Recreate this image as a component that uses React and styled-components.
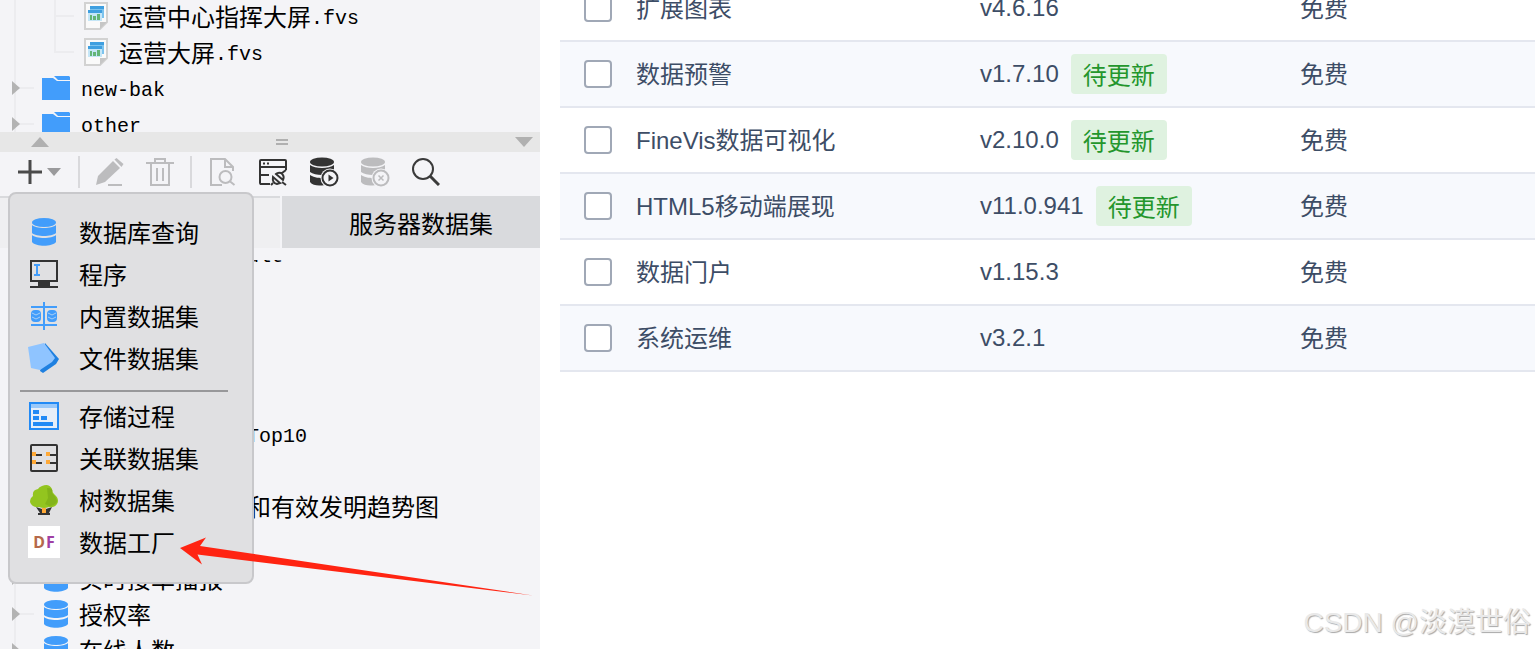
import styled, { createGlobalStyle } from "styled-components";

const files = ["运营中心指挥大屏", "运营大屏"];
const folders = ["new-bak", "other"];

// a row without an icon has its left part under the open menu
const datasets = [
  { latin: "ult" },
  {},
  {},
  {},
  {},
  { latin: "Top10" },
  {},
  { text: "和有效发明趋势图" },
  {},
  { text: "实时接单播报", icon: true },
  { text: "授权率", icon: true },
  { text: "在线人数", icon: true },
];

const plugins = [
  { id: "chart", name: "扩展图表", version: "v4.6.16" },
  { id: "alert", name: "数据预警", version: "v1.7.10", update: true },
  { id: "finevis", name: "FineVis数据可视化", version: "v2.10.0", update: true },
  { id: "html5", name: "HTML5移动端展现", version: "v11.0.941", update: true },
  { id: "portal", name: "数据门户", version: "v1.15.3" },
  { id: "ops", name: "系统运维", version: "v3.2.1" },
];

export default function App() {
  return (
    <Page>
      <GlobalStyle />
      <Sidebar>
        <FileTree>
          {files.map((name) => (
            <TreeRow key={name}>
              <FileGuide last={name === "运营大屏"} />
              <FileIcon />
              <RowText>
                {name}
                <Latin>.fvs</Latin>
              </RowText>
            </TreeRow>
          ))}
          {folders.map((name) => (
            <TreeRow key={name}>
              <BranchGuide />
              <FolderIcon />
              <RowText>
                <Latin>{name}</Latin>
              </RowText>
            </TreeRow>
          ))}
        </FileTree>
        <Splitter>
          <svg width="18" height="10">
            <path d="M0 10 9 0l9 10z" fill="#b0b0b0" />
          </svg>
          <svg width="12" height="6">
            <path d="M0 1h12M0 5h12" stroke="#b0b0b0" strokeWidth="2" />
          </svg>
          <svg width="18" height="10">
            <path d="M0 0h18L9 10z" fill="#b0b0b0" />
          </svg>
        </Splitter>
        <MenuAnchor>
          <Toolbar>
            <AddButton aria-label="add">
              <svg width="44" height="28" viewBox="0 0 44 28">
                <path d="M0 14h24M12 2v24" stroke="#4a4a4a" strokeWidth="3" />
                <path d="M29 10h14l-7 8z" fill="#9a9a9c" />
              </svg>
            </AddButton>
            <Divider />
            <ToolGroup $gap={22}>
              <ToolButton aria-label="edit">
                <PencilIcon />
              </ToolButton>
              <ToolButton aria-label="delete">
                <TrashIcon />
              </ToolButton>
            </ToolGroup>
            <Divider />
            <ToolGroup $gap={23}>
              <ToolButton aria-label="preview">
                <PreviewIcon />
              </ToolButton>
              <ToolButton aria-label="connection">
                <ConnectionIcon />
              </ToolButton>
              <ToolButton aria-label="run">
                <ServerIcon color="#333">
                  <path d="M18.5 17.500v7l5-3.500z" fill="#333" />
                </ServerIcon>
              </ToolButton>
              <ToolButton aria-label="stop">
                <ServerIcon color="#bcbcbe">
                  <path d="m17.500 18.500 5 5m0-5-5 5" stroke="#bcbcbe" strokeWidth="1.500" />
                </ServerIcon>
              </ToolButton>
              <ToolButton aria-label="search">
                <svg width="28" height="28" viewBox="0 0 28 28" fill="none" stroke="#3a3a3a">
                  <circle cx="11" cy="11" r="10" strokeWidth="2" />
                  <path d="m18 18 9 9" strokeWidth="3" />
                </svg>
              </ToolButton>
            </ToolGroup>
          </Toolbar>
          <Menu>
            <MenuItem>
              <MenuIcon>
                <DatabaseIcon />
              </MenuIcon>
              数据库查询
            </MenuItem>
            <MenuItem>
              <MenuIcon>
                <ProgramIcon />
              </MenuIcon>
              程序
            </MenuItem>
            <MenuItem>
              <MenuIcon>
                <BuiltInIcon />
              </MenuIcon>
              内置数据集
            </MenuItem>
            <MenuItem>
              <MenuIcon>
                <FileDataIcon />
              </MenuIcon>
              文件数据集
            </MenuItem>
            <MenuLine />
            <MenuItem>
              <MenuIcon>
                <ProcedureIcon />
              </MenuIcon>
              存储过程
            </MenuItem>
            <MenuItem>
              <MenuIcon>
                <RelationIcon />
              </MenuIcon>
              关联数据集
            </MenuItem>
            <MenuItem>
              <MenuIcon>
                <TreeIcon />
              </MenuIcon>
              树数据集
            </MenuItem>
            <MenuItem>
              <MenuIcon>
                <Factory>
                  <Letter $color="#b5694a">D</Letter>
                  <Letter $color="#a03fa4">F</Letter>
                </Factory>
              </MenuIcon>
              数据工厂
            </MenuItem>
            <Arrow width="354" height="60" viewBox="180 537 354 60">
              <path
                d="M180 548l26-10.500-6 8.500 333 49.500-335.500-41 4.500 10z"
                fill="#ff2412"
              />
            </Arrow>
          </Menu>
        </MenuAnchor>
        <Tabs>
          <Tab aria-label="模板数据集" />
          <Tab $active>服务器数据集</Tab>
        </Tabs>
        <DatasetList>
          {datasets.map((row, index) => (
            <TreeRow key={index}>
              <DatasetGuide arrow={row.icon} />
              {row.icon ? <DatabaseIcon /> : <IconSpace />}
              <RowText $covered={!row.icon}>
                {row.text}
                {row.latin && <Latin>{row.latin}</Latin>}
              </RowText>
            </TreeRow>
          ))}
        </DatasetList>
      </Sidebar>
      <Content>
        <Table>
          <colgroup>
            <col width="76" />
            <col width="344" />
            <col width="320" />
            <col />
          </colgroup>
          <tbody>
            {plugins.map((plugin) => (
              <Row key={plugin.id}>
                <CheckCell>
                  <Checkbox type="checkbox" id={plugin.id} />
                </CheckCell>
                <TextCell>
                  <label htmlFor={plugin.id}>{plugin.name}</label>
                </TextCell>
                <Cell>
                  <Version>
                    {plugin.version}
                    {plugin.update && <Badge>待更新</Badge>}
                  </Version>
                </Cell>
                <TextCell>免费</TextCell>
              </Row>
            ))}
          </tbody>
        </Table>
      </Content>
      <Watermark>CSDN @淡漠世俗</Watermark>
    </Page>
  );
}

function FileGuide({ last }) {
  return (
    <svg width="84" height="36">
      <path
        d={last ? "M15 0v36M55 0v18h19" : "M15 0v36M55 0v36M55 18h19"}
        fill="none"
        stroke="#ececef"
        strokeWidth="2"
      />
    </svg>
  );
}

function BranchGuide() {
  return (
    <svg width="42" height="36">
      <path d="M15 0v36M15 18h19" stroke="#ececef" strokeWidth="2" />
      <path d="M12 11v14l8-7z" fill="#b3b3b3" />
    </svg>
  );
}

function DatasetGuide({ arrow }) {
  return (
    <svg width="44" height="36">
      <path d="M15 0v36M15 18h19" stroke="#ececef" strokeWidth="2" />
      {arrow && <path d="M12 11v14l8-7z" fill="#b3b3b3" />}
    </svg>
  );
}

function FileIcon() {
  return (
    <svg width="24" height="28" viewBox="0 0 24 28">
      <path d="M1 1h22v19l-7 7H1z" fill="#fafafa" stroke="#d2d2d2" strokeWidth="2" />
      <path d="M16 27v-7h7z" fill="#c6c6c6" />
      <path d="M6 4h14v12H6z" fill="#7cc3ee" />
      <path d="M6 4h14v3H6z" fill="#3f9fe0" />
      <path d="M4 8h14v11H4z" fill="#c5e6f7" />
      <path d="M4 8h14v3H4z" fill="#3f9fe0" />
      <path d="M6 13h2v5H6zM9 14h3v4H9zM13 12h3v6h-3z" fill="#63b577" />
    </svg>
  );
}

function FolderIcon() {
  return (
    <svg width="28" height="24" viewBox="0 0 28 24">
      <path d="M0 2h11l4 3h13v19H0z" fill="#429dfb" />
      <path d="M12 0h15l1 1v3H16z" fill="#429dfb" />
    </svg>
  );
}

function DatabaseIcon() {
  return (
    <svg width="24" height="28" viewBox="0 0 24 28" fill="#429dfb">
      <ellipse cx="12" cy="4.500" rx="12" ry="4.500" />
      <path d="M0 7c4 4 20 4 24 0v8c-4 4-20 4-24 0z" />
      <path d="M0 17c4 4 20 4 24 0v7c-4 5-20 5-24 0z" />
    </svg>
  );
}

function PencilIcon() {
  return (
    <svg width="28" height="28" viewBox="0 0 28 28" fill="#bcbcbe">
      <path d="M0 27l2-9L17 3l7 7L9 24z" />
      <path d="m18.500 1.500 2-1.500 7 6-2 3z" />
      <path d="M12 26h14v2H12z" />
    </svg>
  );
}

function TrashIcon() {
  return (
    <svg width="28" height="28" viewBox="0 0 28 28" fill="none" stroke="#bcbcbe" strokeWidth="2">
      <path d="M0 5h28M9 5V1h10v4M5 5v22h18V5M11 10v13M17 10v13" />
    </svg>
  );
}

function PreviewIcon() {
  return (
    <svg width="28" height="28" viewBox="0 0 28 28" fill="none" stroke="#bcbcbe" strokeWidth="2">
      <path d="M14 27H3V1h14l8 8v4M17 1v8h8" />
      <circle cx="17.500" cy="19" r="6" />
      <path d="m21.500 23 5 4" />
    </svg>
  );
}

function ConnectionIcon() {
  return (
    <svg width="28" height="28" viewBox="0 0 28 28" fill="none" stroke="#333" strokeWidth="2">
      <path d="M11 26H2q-1 0-1-1V3q0-1 1-1h24q1 0 1 1v9M1 9h26M1 17h9M1 26h10" />
      <path d="M4 5.500h2M8 5.500h2" />
      <path d="m14 19 7 6-3 1q-5-1-4-7zM17 16l7 6q2-4-2-7-3-1-5 1zM23 15l4-3M14 25l-2 2M23 24l4 3" />
    </svg>
  );
}

function ServerIcon({ color, children }) {
  return (
    <svg width="30" height="30" viewBox="0 0 30 30">
      <g fill={color}>
        <ellipse cx="12" cy="5" rx="12" ry="4.500" />
        <path d="M0 8c5 4 19 4 24 0v7c-5 4-19 4-24 0z" />
        <path d="M0 18c5 3 9 3 15 3v7C9 29 3 29 0 25z" />
      </g>
      <circle cx="20" cy="21" r="9.500" fill="#f4f4f7" />
      <circle cx="20" cy="21" r="7.500" fill="#f4f4f7" stroke={color} strokeWidth="2" />
      {children}
    </svg>
  );
}

function ProgramIcon() {
  return (
    <svg width="28" height="28" viewBox="0 0 28 28">
      <path d="M1 1h26v20H1z" fill="none" stroke="#333" strokeWidth="2" />
      <path d="M8 22h12v4h8v2H0v-2h8z" fill="#333" />
      <path d="M4 5h6M7 5v10M4 15h6" stroke="#429dfb" strokeWidth="2" />
    </svg>
  );
}

function BuiltInIcon() {
  return (
    <svg width="28" height="28" viewBox="0 0 28 28" stroke="#429dfb" strokeWidth="2">
      <path d="M1 5h26M1 23h26M14 0v28" />
      <g fill="#429dfb" stroke="none">
        <rect x="1" y="8" width="10" height="12" rx="4" />
        <rect x="17" y="8" width="10" height="12" rx="4" />
      </g>
      <path
        d="m2 11 4 2 4-2M2 15l4 2 4-2M18 11l4 2 4-2M18 15l4 2 4-2"
        fill="none"
        stroke="#a9cff5"
        strokeWidth="1"
      />
    </svg>
  );
}

function FileDataIcon() {
  return (
    <svg width="32" height="30" viewBox="0 0 32 30">
      <path d="M17 0l14 16-3 5-13 9-3-2z" fill="#1f80e0" />
      <path d="M0 4 16 0l11 15-3 4-12 8-9-2z" fill="#8fc4ff" />
    </svg>
  );
}

function ProcedureIcon() {
  return (
    <svg width="30" height="28" viewBox="0 0 30 28">
      <path d="M1 1h28v26H1z" fill="#e6eef8" stroke="#228af5" strokeWidth="2" />
      <path d="M2 2h26v4H2z" fill="#98c8fa" />
      <path d="M4 8h6v4H4zM4 14h6v4H4zM12 14h6v4h-6zM4 20h20v4H4z" fill="#228af5" />
    </svg>
  );
}

function RelationIcon() {
  return (
    <svg width="28" height="28" viewBox="0 0 28 28">
      <rect x="1" y="1" width="26" height="26" rx="1" fill="none" stroke="#333" strokeWidth="2" />
      <path d="M6 11h6M20 11h7M6 19h6M20 19h7" stroke="#333" strokeWidth="2" />
      <path d="M2 8h4v4H2zM16 8h4v4h-4zM2 16h4v4H2zM16 16h4v4h-4z" fill="#ffa936" />
    </svg>
  );
}

function TreeIcon() {
  return (
    <svg width="28" height="30" viewBox="0 0 28 30">
      <path d="M6 22l6 2h4l6-2-3 6h1v2H8v-2h2z" fill="#333" />
      <path d="M12 23h4v5h-4z" fill="#ffa936" />
      <path
        d="M12 1q7-3 10 3 0 3 2 5 6 5 3 10-3 4-8 3-5 2-10 0-7 1-9-5 0-4 3-6-1-6 5-7 1-2 4-3z"
        fill="#93c51f"
      />
      <path d="M17 3q7 0 5 5 5 5 5 9-3 4-8 4l-4-2 3-6z" fill="#83b41a" />
    </svg>
  );
}

const GlobalStyle = createGlobalStyle`
  body {
    margin: 0;
    background-color: #ffffff;
  }
  button {
    font: inherit;
    color: inherit;
    padding: 0;
    border: none;
    background-color: transparent;
  }
  svg {
    display: block;
    flex-shrink: 0;
  }
`;

const Page = styled.div`
  position: relative;
  display: flex;
  height: 100vh;
  overflow: hidden;
  font-family: "Liberation Sans", "Noto Sans CJK SC", sans-serif;
  font-size: 24px;
`;

const Sidebar = styled.div`
  flex: 0 0 540px;
  display: flex;
  flex-direction: column;
  background-color: #f4f4f7;
  color: #000000;
  font-family: "Noto Sans CJK SC", sans-serif;
  line-height: 36px;
`;

const FileTree = styled.div`
  height: 134px;
  margin-top: -2px;
  overflow: hidden;
`;

const TreeRow = styled.div`
  display: flex;
  align-items: center;
  height: 36px;
  white-space: nowrap;
`;

const RowText = styled.span`
  display: flex;
  align-items: center;
  margin-left: ${(props) => (props.$covered ? "179px" : "11px")};
`;

const IconSpace = styled.span`
  width: 24px;
`;

const Latin = styled.span`
  padding-top: 6px;
  font-family: "Liberation Mono", monospace;
  font-size: 20px;
`;

const Splitter = styled.div`
  flex: 0 0 20px;
  display: flex;
  justify-content: space-between;
  align-items: center;
  padding: 0 7px 0 31px;
  background-color: #e7e7e7;
`;

const MenuAnchor = styled.div`
  position: relative;
`;

const Toolbar = styled.div`
  display: flex;
  align-items: center;
  height: 44px;
  padding: 0 18px 4px;
  box-sizing: border-box;
`;

const ToolGroup = styled.div`
  display: flex;
  gap: ${(props) => props.$gap}px;
`;

const ToolButton = styled.button`
  width: 28px;
  height: 30px;
  display: flex;
  align-items: center;
`;

const AddButton = styled(ToolButton)`
  width: 44px;
`;

const Divider = styled.div`
  width: 2px;
  height: 32px;
  margin: 0 16px;
  background-color: #d9d9dc;
`;

const Menu = styled.div`
  position: absolute;
  top: 40px;
  left: 8px;
  width: 246px;
  padding: 17px 0 19px;
  box-sizing: border-box;
  border: 2px solid #c8c8cb;
  border-radius: 8px;
  background-color: #e0e0e2;
`;

const MenuItem = styled.button`
  display: flex;
  align-items: center;
  gap: 19px;
  width: 100%;
  height: 42px;
  padding-left: 18px;
  text-align: left;
`;

const MenuIcon = styled.span`
  width: 32px;
  display: flex;
  justify-content: center;
`;

const MenuLine = styled.div`
  height: 2px;
  margin: 11px 24px 3px 10px;
  background-color: #98989a;
`;

const Factory = styled.span`
  width: 32px;
  height: 32px;
  display: flex;
  justify-content: center;
  align-items: center;
  gap: 1px;
  background-color: #ffffff;
  font-family: "Noto Sans", sans-serif;
  font-size: 16px;
  font-weight: 700;
`;

const Letter = styled.span`
  color: ${(props) => props.$color};
`;

const Arrow = styled.svg`
  position: absolute;
  top: 343px;
  left: 170px;
`;

const Tabs = styled.div`
  flex: 0 0 52px;
  display: flex;
  gap: 2px;
`;

const Tab = styled.button`
  flex: ${(props) => (props.$active ? "0 0 258px" : "1")};
  padding-left: 20px;
  border-top: 2px solid #d9dadd;
  background-color: ${(props) => (props.$active ? "#d9dadd" : "#efeff1")};
`;

const DatasetList = styled.div`
  flex: 1;
  min-height: 0;
  margin-top: 12px;
  overflow: hidden;

  ${TreeRow}:first-child {
    margin-top: -24px;
  }
`;

const Content = styled.div`
  flex: 1;
  min-width: 0;
  padding-left: 20px;
`;

const Table = styled.table`
  width: 100%;
  margin-top: -24px;
  table-layout: fixed;
  border-spacing: 0;
  color: #3d4d66;
`;

const Row = styled.tr`
  height: 66px;

  &:nth-child(even) {
    background-color: #f7f9fd;
  }
`;

const Cell = styled.td`
  padding: 0;
  border-bottom: 2px solid #e4e7ef;
  line-height: 40px;
  white-space: nowrap;
`;

const CheckCell = styled(Cell)`
  padding-left: 24px;
`;

const TextCell = styled(Cell)`
  padding-top: 2px;
`;

const Checkbox = styled.input`
  appearance: none;
  display: block;
  width: 28px;
  height: 28px;
  margin: 0;
  box-sizing: border-box;
  border: 2px solid #a0a8b6;
  border-radius: 4px;
  background-color: #ffffff;
`;

const Version = styled.div`
  display: flex;
  align-items: center;
  gap: 12px;
`;

const Badge = styled.span`
  padding: 0 12px;
  border-radius: 4px;
  background-color: #dff2e0;
  color: #24962c;
  font-family: "Noto Sans CJK SC", sans-serif;
`;

const Watermark = styled.div`
  position: absolute;
  right: 4px;
  bottom: 6px;
  color: #e9e9e9;
  font-size: 28px;
  line-height: 40px;
  text-shadow: 1px 1px 1px #a8a8a8;
`;
